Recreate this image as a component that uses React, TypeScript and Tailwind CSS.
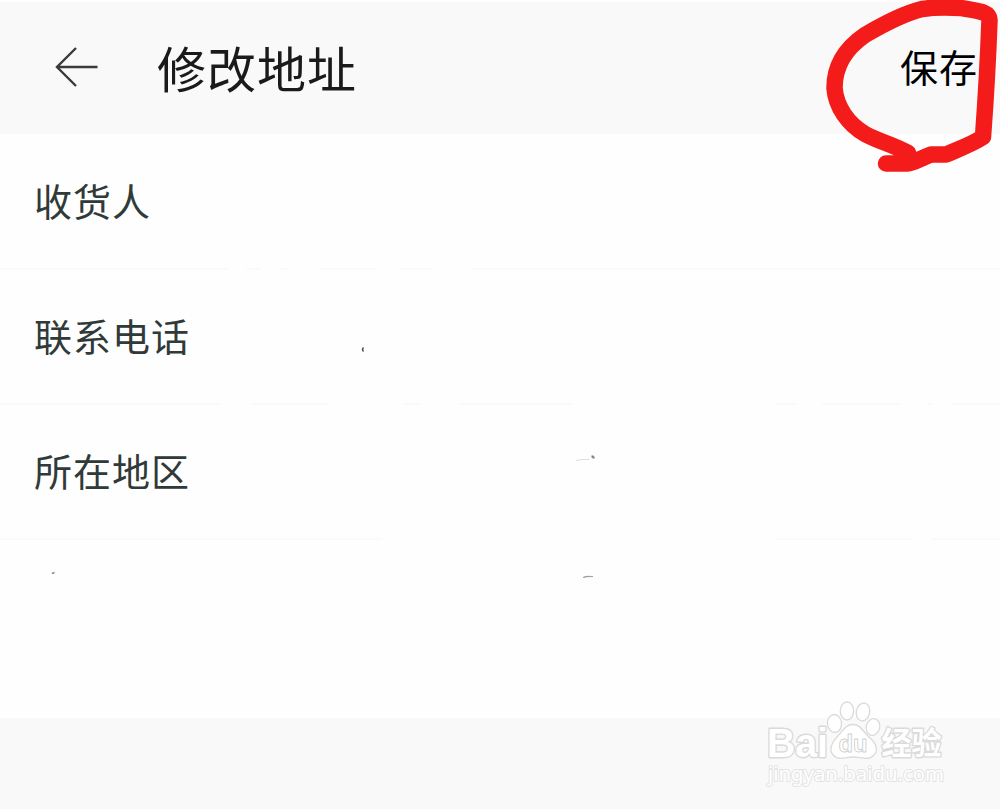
type Segment = [start: number, end: number];

type Field = {
  label: string;
  segments: Segment[];
};

const fields: Field[] = [
  {
    label: "收货人",
    segments: [[0, 228], [246, 260], [280, 288], [320, 375], [400, 432], [472, 1000]],
  },
  {
    label: "联系电话",
    segments: [[0, 221], [251, 328], [403, 420], [460, 573], [776, 798], [822, 902], [928, 932], [953, 1000]],
  },
  {
    label: "所在地区",
    segments: [[0, 382], [776, 912], [932, 1000]],
  },
];

const Divider = ({ segments }: { segments: Segment[] }) => (
  <div className="flex h-0.5">
    {segments.map(([start, end], i) => (
      <span
        key={start}
        className="h-0.5 shrink-0 bg-[#fafafa]"
        style={{
          width: end - start,
          marginLeft: start - (i > 0 ? segments[i - 1][1] : 0),
        }}
      />
    ))}
  </div>
);

const BackArrow = () => (
  <svg width="44" height="42" viewBox="0 0 44 42" fill="none" stroke="#3a3a3a" strokeWidth="2.4">
    <path d="M42.500 20H2M21 1L2 20L21 39" />
  </svg>
);

// Red marker stroke around the save button
const MarkerCircle = () => (
  <svg
    className="pointer-events-none absolute top-0 right-0"
    width="200"
    height="190"
    viewBox="0 0 200 190"
    fill="none"
    stroke="#f41b1b"
    strokeWidth="16.5"
    strokeLinecap="round"
    strokeLinejoin="round"
  >
    <path d="M86 163.500H107C114 163 121 158 131 154.500H146C158 149 171 145 183 137C185 110 188 62 189.500 20C189 11 177 11 161 8C145 7 135 7 122 9C102 14 82 25 65 35C46 48 34.500 65 34.500 88C36 107 48 124 65 134C80 142 94 145 108 153" />
  </svg>
);

const Specks = () => (
  <svg className="pointer-events-none absolute top-0 left-0" width="1000" height="809" fill="none">
    <path d="M363.500 347.500Q361.500 349.500 363.500 351.500" stroke="#444" strokeWidth="1.300" />
    <path d="M576 460.500Q582 459 589 459.500" stroke="#ddd" />
    <path d="M591.500 455.500h2v1h1v2h-2v-1h-1z" fill="#777" />
    <path d="M583 577.500Q586 575.500 593 576.500Q587 576.500 583 577.500Z" fill="#666" stroke="#999" strokeWidth="0.700" />
    <path d="M52 573.500L54.500 572.500" stroke="#888" strokeWidth="1.600" />
  </svg>
);

const Watermark = () => (
  <svg
    className="pointer-events-none absolute top-[698px] left-[760px]"
    width="190"
    height="92"
    viewBox="0 0 190 92"
    fill="#fff"
    stroke="#dadada"
    strokeWidth="1.300"
    strokeLinejoin="round"
  >
    <g fontWeight="700" paintOrder="stroke" strokeWidth="2.800">
      <text x="7" y="58.500" fontFamily="'Liberation Sans', sans-serif" fontSize="40" textLength="61" lengthAdjust="spacingAndGlyphs">
        Bai
      </text>
      <text x="121.500" y="55.500" fontFamily="'Noto Sans CJK SC', sans-serif" fontSize="30.500" textLength="60" lengthAdjust="spacingAndGlyphs">
        经验
      </text>
    </g>
    <ellipse cx="74.500" cy="25.500" rx="7" ry="9" transform="rotate(-6 74.500 25.500)" />
    <ellipse cx="87" cy="13" rx="6.700" ry="9" />
    <ellipse cx="103" cy="14" rx="6.700" ry="9" transform="rotate(12 103 14)" />
    <ellipse cx="113" cy="29" rx="6.700" ry="8.500" transform="rotate(15 113 29)" />
    <path d="M93 26.500C101 26.500 103 34 110 40C117 46 118 53 114 57C109 63 101 59 93 59C86 59 78 63 73 57C69 52 71 45 77 39C83 33 85 26.500 93 26.500Z" />
    <text x="78.500" y="54" fontFamily="'Liberation Sans', sans-serif" fontSize="24" fontWeight="700" textLength="29" lengthAdjust="spacingAndGlyphs" strokeWidth="0.900" stroke="#d0d0d0">
      du
    </text>
    <text
      x="8"
      y="82.500"
      fontFamily="'Noto Sans', sans-serif"
      fontSize="20"
      textLength="176"
      lengthAdjust="spacingAndGlyphs"
      paintOrder="stroke"
      stroke="#e3e3e3"
      strokeWidth="1.900"
    >
      jingyan.baidu.com
    </text>
  </svg>
);

const App = () => {
  return (
    <div className="relative flex h-[809px] w-[1000px] flex-col overflow-hidden bg-[#fefefe] pt-0.5 font-['Noto_Sans_CJK_SC',sans-serif]">
      <header className="flex h-33 shrink-0 items-center bg-[#f9f9f9] pr-[22px] pl-[55px]">
        <button type="button" aria-label="返回">
          <BackArrow />
        </button>
        <h1 className="ml-[58px] pb-1 text-[49px] leading-none tracking-[1px] text-[#1a1a1a]">修改地址</h1>
        <button type="button" className="ml-auto pb-1 text-[38px] leading-none tracking-[1px] text-black">
          保存
        </button>
      </header>

      <main className="flex-1 pt-px">
        {fields.map((field) => (
          <div key={field.label} className="flex h-[135px] flex-col">
            <div className="flex flex-1 items-center pb-[3px] pl-[34px] text-[38px] leading-none tracking-[1px] text-[#303a39]">
              {field.label}
            </div>
            <Divider segments={field.segments} />
          </div>
        ))}
      </main>

      <footer className="h-[91px] shrink-0 bg-[#f9f9f9]" />

      <Specks />
      <Watermark />
      <MarkerCircle />
    </div>
  );
};

export default App;
